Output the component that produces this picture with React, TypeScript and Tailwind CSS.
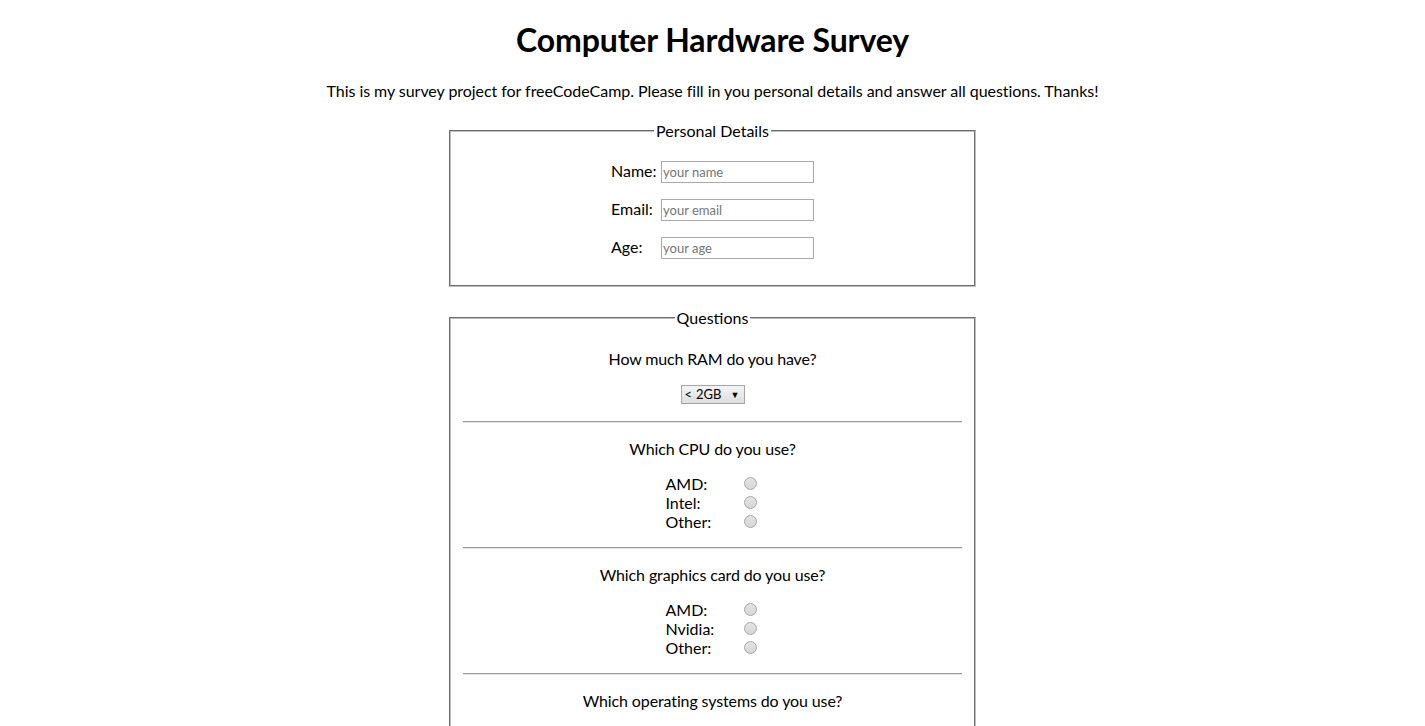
import React from "react";

function Radio({ name }: { name: string }) {
  return (
    <input
      type="radio"
      name={name}
      className="appearance-none w-[13px] h-[13px] rounded-full border border-[#a8a8a8] bg-[linear-gradient(#e4e4e4,#d6d6d6)] m-0 shrink-0"
    />
  );
}

function RadioGroup({ name, options }: { name: string; options: string[] }) {
  return (
    <div className="flex flex-col items-center">
      {options.map((o) => (
        <label key={o} className="flex w-[94px] h-[19px] items-center">
          <span className="w-[78px] text-left leading-[19px]">{o}</span>
          <Radio name={name} />
        </label>
      ))}
    </div>
  );
}

function Hr({ className }: { className: string }) {
  return <div className={"h-[2px] border-t border-[#9c9c9c] border-b-[1px] border-b-[#e6e6e6] " + className} />;
}

function Field({ label, placeholder }: { label: string; placeholder: string }) {
  return (
    <div className="flex items-center justify-center">
      <label className="w-[50px] text-left leading-[19px] pb-[3px]">{label}</label>
      <input
        type="text"
        placeholder={placeholder}
        className="w-[153px] h-[22px] border border-[#a9a9a9] px-[1px] text-[13px] font-['Lato',sans-serif] placeholder:text-[#757575] outline-none"
      />
    </div>
  );
}

export default function App() {
  return (
    <div className="min-h-screen bg-white text-black text-center text-[16px] font-['Lato',sans-serif]">
      <h1 className="text-[32px] font-bold leading-[38px] pt-[21px] tracking-[-0.1px]">Computer Hardware Survey</h1>
      <p className="mt-[22px] leading-[19px] tracking-[-0.05px]">
        This is my survey project for freeCodeCamp. Please fill in you personal details and answer all questions. Thanks!
      </p>
      <form className="mt-[21px] pb-10">
        <fieldset className="mx-auto w-[527px] border-2 [border-style:groove] border-[#c0c0c0] px-3 pb-[26px]">
          <legend className="mx-auto px-[2px] leading-[19px]">Personal Details</legend>
          <div className="flex flex-col gap-[16px] pt-[21px]">
            <Field label="Name:" placeholder="your name" />
            <Field label="Email:" placeholder="your email" />
            <Field label="Age:" placeholder="your age" />
          </div>
        </fieldset>

        <fieldset className="mx-auto mt-[21px] w-[527px] border-2 [border-style:groove] border-[#c0c0c0] px-3 pb-[25px]">
          <legend className="mx-auto px-[2px] leading-[19px]">Questions</legend>
          <div className="pt-[22px]">
            <p className="leading-[19px] tracking-[-0.15px]">How much RAM do you have?</p>
            <div className="mt-[17px] flex justify-center">
              <div className="w-[64px] h-[19px] border border-[#a6a6a6] bg-[linear-gradient(#f4f4f4,#dedede)] flex items-center pl-[3px] pr-[4px] text-[13px] leading-none">
                <span className="mr-[4px]">&lt;</span>
                <span>2GB</span>
                <span className="ml-auto text-[9px]">▼</span>
              </div>
            </div>
            <Hr className="mt-[17px] mb-[16px]" />
            <p className="leading-[19px] tracking-[-0.12px]">Which CPU do you use?</p>
            <div className="mt-[16px]">
              <RadioGroup name="cpu" options={["AMD:", "Intel:", "Other:"]} />
            </div>
            <Hr className="mt-[16px] mb-[16px]" />
            <p className="leading-[19px] tracking-[-0.12px]">Which graphics card do you use?</p>
            <div className="mt-[16px]">
              <RadioGroup name="gpu" options={["AMD:", "Nvidia:", "Other:"]} />
            </div>
            <Hr className="mt-[16px] mb-[16px]" />
            <p className="leading-[19px] tracking-[-0.12px]">Which operating systems do you use?</p>
            <div className="mt-[16px]">
              <RadioGroup name="os" options={["Windows:", "macOS:", "Linux:"]} />
            </div>
          </div>
        </fieldset>
      </form>
    </div>
  );
}
